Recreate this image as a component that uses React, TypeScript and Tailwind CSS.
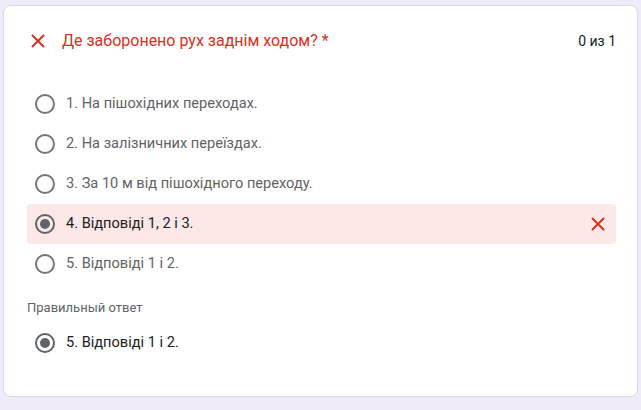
import React from "react";
import { X } from "lucide-react";

const options = [
  "1. На пішохідних переходах.",
  "2. На залізничних переїздах.",
  "3. За 10 м від пішохідного переходу.",
  "4. Відповіді 1, 2 і 3.",
  "5. Відповіді 1 і 2.",
];

const selected = 3;

function Radio({ checked }: { checked: boolean }) {
  return (
    <div
      className={`w-5 h-5 rounded-full border-2 flex items-center justify-center shrink-0 ${
        checked ? "border-[#5f6368]" : "border-[#757575]"
      }`}
    >
      {checked && <div className="w-[10px] h-[10px] rounded-full bg-[#5f6368]" />}
    </div>
  );
}

export default function App() {
  return (
    <div
      className="w-[641px] h-[410px] bg-[#f0ebf8] pt-[5px] pl-[3px] overflow-hidden"
      style={{ fontFamily: "Roboto, 'Noto Sans', sans-serif" }}
    >
      <div className="w-[635px] h-[392px] bg-white rounded-lg border border-[#dadce0] pt-[23px] pl-[23px] pr-[21px]">
        {/* header */}
        <div className="flex items-center h-6">
          <X className="w-[22px] h-[22px] text-[#d93025]" strokeWidth={2.2} />
          <div className="ml-[13px] text-[16px] leading-6 text-[#d93025]">
            Де заборонено рух заднім ходом? *
          </div>
          <div className="ml-auto text-[14px] text-[#202124]">0 из 1</div>
        </div>

        {/* options */}
        <div className="mt-[31px] flex flex-col">
          {options.map((o, i) => {
            const isSel = i === selected;
            return (
              <div
                key={i}
                className={`flex items-center h-10 pl-[8px] pr-[7px] rounded ${
                  isSel ? "bg-[#fce8e6]" : ""
                }`}
              >
                <Radio checked={isSel} />
                <span
                  className={`ml-[11px] text-[14.6px] ${
                    isSel ? "text-[#202124]" : "text-[#5f6368]"
                  }`}
                >
                  {o}
                </span>
                {isSel && (
                  <X className="ml-auto w-[22px] h-[22px] text-[#d93025]" strokeWidth={2.2} />
                )}
              </div>
            );
          })}
        </div>

        {/* correct answer */}
        <div className="mt-[14px] text-[13px] leading-5 text-[#5f6368]">Правильный ответ</div>
        <div className="mt-[5px] flex items-center h-10 pl-[8px]">
          <Radio checked />
          <span className="ml-[11px] text-[14.6px] text-[#202124]">5. Відповіді 1 і 2.</span>
        </div>
      </div>
    </div>
  );
}
